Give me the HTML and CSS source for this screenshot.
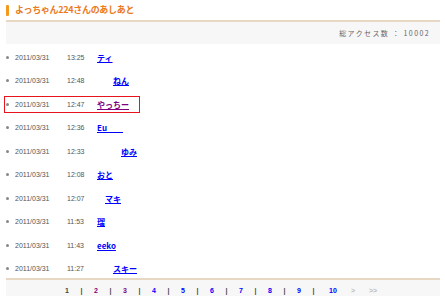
FILE: index.html
```html
<!DOCTYPE html>
<html lang="ja">
<head>
    <meta charset="UTF-8">
    <title>よっちゃん224さんのあしあと</title>
    <link rel="stylesheet" href="styles.css">
</head>
<body>
    <div class="wrap">
        <h1 class="title">よっちゃん224さんのあしあと</h1>
        <div class="count">総アクセス数 ： 10002</div>

        <ul class="visits">
            <li><span class="dot"></span><span class="date">2011/03/31</span><span class="time">13:25</span><span class="who"><a href="#">ティ</a></span></li>
            <li><span class="dot"></span><span class="date">2011/03/31</span><span class="time">12:48</span><span class="who">　　<a href="#">ねん</a></span></li>
            <li class="me"><span class="dot"></span><span class="date">2011/03/31</span><span class="time">12:47</span><span class="who"><a href="#" class="seen">やっちー</a></span></li>
            <li><span class="dot"></span><span class="date">2011/03/31</span><span class="time">12:36</span><span class="who"><a href="#">Eu　　</a></span></li>
            <li><span class="dot"></span><span class="date">2011/03/31</span><span class="time">12:33</span><span class="who">　　　<a href="#">ゆみ</a></span></li>
            <li><span class="dot"></span><span class="date">2011/03/31</span><span class="time">12:08</span><span class="who"><a href="#">おと</a></span></li>
            <li><span class="dot"></span><span class="date">2011/03/31</span><span class="time">12:07</span><span class="who">　<a href="#">マキ</a></span></li>
            <li><span class="dot"></span><span class="date">2011/03/31</span><span class="time">11:53</span><span class="who"><a href="#">瑠</a></span></li>
            <li><span class="dot"></span><span class="date">2011/03/31</span><span class="time">11:43</span><span class="who"><a href="#">eeko</a></span></li>
            <li><span class="dot"></span><span class="date">2011/03/31</span><span class="time">11:27</span><span class="who">　　<a href="#">スキー</a></span></li>
        </ul>

        <div class="pager">
            <span class="pg cur">1</span><span class="pg bar">|</span>
            <a class="pg seen" href="#">2</a><span class="pg bar">|</span>
            <a class="pg seen" href="#">3</a><span class="pg bar">|</span>
            <a class="pg" href="#">4</a><span class="pg bar">|</span>
            <a class="pg" href="#">5</a><span class="pg bar">|</span>
            <a class="pg" href="#">6</a><span class="pg bar">|</span>
            <a class="pg" href="#">7</a><span class="pg bar">|</span>
            <a class="pg" href="#">8</a><span class="pg bar">|</span>
            <a class="pg" href="#">9</a><span class="pg bar">|</span>
            <a class="pg ten" href="#">10</a>
            <span class="pg off">&gt;</span>
            <span class="pg off">&gt;&gt;</span>
        </div>
    </div>
</body>
</html>
```

FILE: styles.css
```css
body {
    margin: 0;
    background: #fff;
    font-family: "Liberation Sans", Arial, "Noto Sans CJK JP", sans-serif;
    color: #555;
}
.wrap {
    width: 434px;
    margin-left: 6px;
}
.title {
    margin: 0;
    height: 22px;
    padding: 4px 0 0 9px;
    box-sizing: border-box;
    font-family: "Noto Sans CJK JP", sans-serif;
    font-size: 9px;
    line-height: 12px;
    font-weight: bold;
    color: #ea7a1c;
    letter-spacing: -0.3px;
    position: relative;
    border-bottom: 2px solid #e6d8c3;
}
.title:before {
    content: "";
    position: absolute;
    left: 0;
    top: 5px;
    width: 3px;
    height: 11px;
    background: #f39a1e;
    border-radius: 1px;
}
.count {
    height: 22px;
    background: #f7f7f7;
    text-align: right;
    padding-right: 10px;
    font-family: "Noto Sans CJK JP", sans-serif;
    font-size: 7px;
    line-height: 22px;
    letter-spacing: 1.4px;
    color: #666;
}
.visits {
    list-style: none;
    margin: 0 0 0 -2px;
    padding: 4.5px 0 0;
    display: flex;
    flex-direction: column;
    gap: 6.5px;
    height: 233.5px;
    box-sizing: border-box;
}
.visits li {
    width: 136px;
    height: 17px;
    box-sizing: border-box;
    border: 1px solid transparent;
    display: grid;
    grid-template-columns: 10px 52px 30px auto;
    align-items: center;
    font-size: 7px;
}
.visits li.me {
    border-color: #e8141c;
}
.dot {
    width: 3px;
    height: 3px;
    border-radius: 50%;
    background: #888;
    margin-left: 1px;
}
.who {
    font-family: "Noto Sans CJK JP", sans-serif;
    font-size: 8px;
    font-weight: bold;
    white-space: pre;
}
a {
    color: #0000ff;
}
a.seen {
    color: #800080;
}
.pager {
    border-top: 2px solid #e6d8c3;
    background: #f7f7f7;
    height: 20px;
    padding: 5px 0 0 54px;
    box-sizing: border-box;
    display: flex;
    align-items: center;
    font-size: 7px;
    font-weight: bold;
}
.pg {
    width: 14px;
    text-align: center;
    line-height: 10px;
    text-decoration: none;
}
.pg.bar {
    width: 15px;
}
.pg.cur, .pg.bar {
    color: #444;
}
.pg.ten {
    width: 20px;
    margin-left: 2px;
}
.pg.off {
    color: #bbb;
    width: 20px;
}
```
